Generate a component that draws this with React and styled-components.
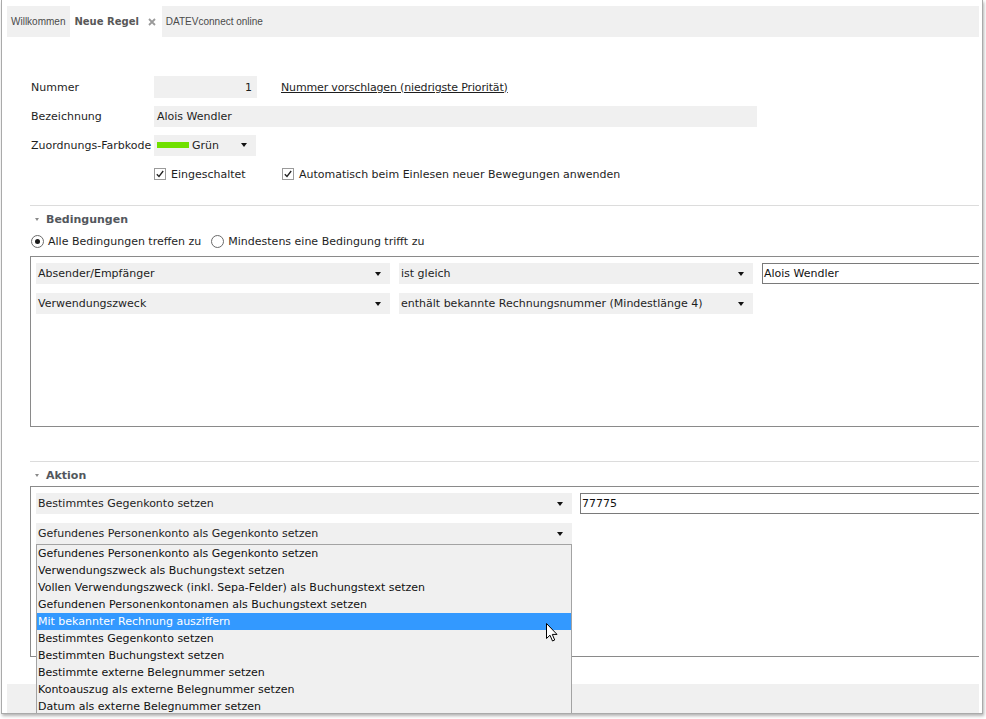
import React from "react";
import styled, { createGlobalStyle } from "styled-components";

const GlobalStyle = createGlobalStyle`
  html, body {
    margin: 0;
    padding: 0;
    background: #fff;
  }
  body {
    font-family: "DejaVu Sans", sans-serif;
    font-size: 11px;
    color: #1e1e1e;
  }
`;

const Screen = styled.div`
  width: 986px;
  height: 719px;
  overflow: hidden;
  background: #fff;
`;

const Frame = styled.div`
  box-sizing: border-box;
  margin-left: 1px;
  width: 982px;
  height: 714px;
  padding: 6px 3px 0 5px;
  border: 1px solid #aaaaaa;
  border-top: none;
  box-shadow: 1px 2px 3px rgba(0, 0, 0, 0.3);
  display: flex;
  flex-direction: column;
  overflow: hidden;
`;

const TabBar = styled.div`
  height: 31px;
  flex: none;
  display: flex;
  background: #f0f0f0;
`;

const Tab = styled.div`
  display: flex;
  align-items: center;
  gap: 9px;
  padding: ${(p) => (p.active ? "0 6px 0 4px" : "0 5px 0 4px")};
  background: ${(p) => (p.active ? "#fff" : "transparent")};
  color: ${(p) => (p.active ? "#585858" : "#4a4a4a")};
  font-family: ${(p) =>
    p.active ? '"DejaVu Sans", sans-serif' : '"Liberation Sans", sans-serif'};
  font-weight: ${(p) => (p.active ? 700 : 400)};
  font-size: 10px;
`;

const Content = styled.div`
  flex: 1;
  display: flex;
  flex-direction: column;
  overflow: hidden;
`;

const Form = styled.div`
  display: grid;
  grid-template-columns: 123px 1fr;
  grid-auto-rows: 22px;
  row-gap: 7px;
  padding: 39px 0 0 24px;
  align-items: center;
`;

const Label = styled.div`
  color: #1e1e1e;
`;

const Line = styled.div`
  display: flex;
  align-items: center;
  height: 100%;
`;

const Field = styled.div`
  box-sizing: border-box;
  width: ${(p) => p.w}px;
  height: ${(p) => p.h || 22}px;
  display: flex;
  align-items: center;
  justify-content: ${(p) => (p.right ? "flex-end" : "flex-start")};
  padding: 0 5px 0 3px;
  background: #f0f0f0;
`;

const LinkText = styled.span`
  margin-left: 24px;
  text-decoration: underline;
  color: #1e1e1e;
  letter-spacing: -0.15px;
`;

const SelectBox = styled.div`
  position: relative;
  box-sizing: border-box;
  width: ${(p) => p.w}px;
  height: 21px;
  flex: none;
  display: flex;
  align-items: center;
  gap: 3px;
  padding: 0 9px 0 2px;
  background: #f0f0f0;
`;

const SelectText = styled.span`
  flex: 1;
  white-space: nowrap;
`;

const Arrow = styled.span`
  width: 0;
  height: 0;
  border-left: 3.5px solid transparent;
  border-right: 3.5px solid transparent;
  border-top: 4px solid #111;
`;

const Swatch = styled.span`
  width: 32px;
  height: 6px;
  background: #70e000;
  margin-left: 1px;
`;

const CheckRow = styled.label`
  display: flex;
  align-items: center;
  gap: 5px;
  width: ${(p) => p.w || "auto"};
`;

const CheckBox = styled.span`
  box-sizing: border-box;
  width: 12px;
  height: 12px;
  border: 1px solid #9a9a9a;
  background: #fff;
  display: flex;
  align-items: center;
  justify-content: center;
`;

const Divider = styled.div`
  margin: ${(p) => p.top}px 0 0 23px;
  border-top: 1px solid #dcdcdc;
`;

const SectionHead = styled.div`
  box-sizing: border-box;
  height: 24px;
  padding-top: 2px;
  display: flex;
  align-items: center;
  gap: 7px;
  padding-left: 28px;
  font-weight: 700;
  color: #53575d;
`;

const Caret = styled.span`
  width: 0;
  height: 0;
  border-left: 2.5px solid transparent;
  border-right: 2.5px solid transparent;
  border-top: 3px solid #8a8a8a;
`;

const RadioRow = styled.div`
  height: 20px;
  margin-top: 1px;
  display: flex;
  align-items: center;
  padding-left: 24px;
`;

const RadioOption = styled.label`
  display: flex;
  align-items: center;
  gap: 4px;
  margin-right: 10px;
`;

const Radio = styled.span`
  box-sizing: border-box;
  width: 13px;
  height: 13px;
  border-radius: 50%;
  border: 1px solid #6a6a6a;
  background: #fff;
  display: flex;
  align-items: center;
  justify-content: center;
  &::after {
    content: "";
    width: 5px;
    height: 5px;
    border-radius: 50%;
    background: ${(p) => (p.checked ? "#1a1a1a" : "transparent")};
  }
`;

const RuleBox = styled.div`
  box-sizing: border-box;
  height: 171px;
  margin: ${(p) => p.top || 0}px -30px 0 23px;
  padding: 6px 5px;
  border: 1px solid #8a8a8a;
  display: flex;
  flex-direction: column;
  gap: 9px;
`;

const RuleRow = styled.div`
  display: flex;
  gap: ${(p) => p.gap || 9}px;
`;

const TextInput = styled.div`
  box-sizing: border-box;
  flex: 1;
  height: 21px;
  border: 1px solid #7a7a7a;
  background: #fff;
  display: flex;
  align-items: center;
  padding-left: 1px;
  color: #111;
`;

const DropList = styled.div`
  position: absolute;
  top: 100%;
  left: 0;
  z-index: 5;
  box-sizing: border-box;
  width: 536px;
  border: 1px solid #a3a3a3;
  background: #f0f0f0;
`;

const DropItem = styled.div`
  height: 17px;
  line-height: 17px;
  padding-left: 1px;
  white-space: nowrap;
  background: ${(p) => (p.selected ? "#3399ff" : "transparent")};
  color: ${(p) => (p.selected ? "#fff" : "#111")};
`;

const Pointer = styled.svg`
  position: absolute;
  left: 509px;
  top: 78px;
`;

const Footer = styled.div`
  margin-top: 27px;
  flex: 1;
  background: #f0f0f0;
`;

const CheckMark = () => (
  <svg width="8" height="8" viewBox="0 0 8 8">
    <path d="M0.8 4.2 L3 6.5 L7.2 1" fill="none" stroke="#222" strokeWidth="1.3" />
  </svg>
);

const CloseX = () => (
  <svg width="8" height="8" viewBox="0 0 8 8">
    <path d="M1 1 L7 7 M7 1 L1 7" stroke="#9a9a9a" strokeWidth="1.8" />
  </svg>
);

const Select = ({ w, children, list }) => (
  <SelectBox w={w}>
    <SelectText>{children}</SelectText>
    <Arrow />
    {list}
  </SelectBox>
);

const actions = [
  "Gefundenes Personenkonto als Gegenkonto setzen",
  "Verwendungszweck als Buchungstext setzen",
  "Vollen Verwendungszweck (inkl. Sepa-Felder) als Buchungstext setzen",
  "Gefundenen Personenkontonamen als Buchungstext setzen",
  "Mit bekannter Rechnung ausziffern",
  "Bestimmtes Gegenkonto setzen",
  "Bestimmten Buchungstext setzen",
  "Bestimmte externe Belegnummer setzen",
  "Kontoauszug als externe Belegnummer setzen",
  "Datum als externe Belegnummer setzen",
  "Buchungsdatum als Belegdatum setzen",
];

const ActionList = () => (
  <DropList>
    {actions.map((a, i) => (
      <DropItem key={i} selected={i === 4}>
        {a}
      </DropItem>
    ))}
    <Pointer width="13" height="20" viewBox="0 0 13 20">
      <path
        d="M0.5 0.5 L0.5 15.5 L4 12.2 L6.5 18 L8.7 17 L6.3 11.4 L11 11.4 Z"
        fill="#fff"
        stroke="#000"
        strokeWidth="1"
        strokeLinejoin="round"
      />
    </Pointer>
  </DropList>
);

export default function App() {
  return (
    <Screen>
      <GlobalStyle />
      <Frame>
        <TabBar>
          <Tab>Willkommen</Tab>
          <Tab active>
            Neue Regel
            <CloseX />
          </Tab>
          <Tab>DATEVconnect online</Tab>
        </TabBar>
        <Content>
          <Form>
            <Label>Nummer</Label>
            <Line>
              <Field w={103} right>
                1
              </Field>
              <LinkText>Nummer vorschlagen (niedrigste Priorität)</LinkText>
            </Line>
            <Label>Bezeichnung</Label>
            <Line>
              <Field w={603} h={21}>
                Alois Wendler
              </Field>
            </Line>
            <Label>Zuordnungs-Farbkode</Label>
            <Line>
              <SelectBox w={102}>
                <Swatch />
                <SelectText>Grün</SelectText>
                <Arrow />
              </SelectBox>
            </Line>
            <span />
            <Line>
              <CheckRow w="128px">
                <CheckBox>
                  <CheckMark />
                </CheckBox>
                Eingeschaltet
              </CheckRow>
              <CheckRow>
                <CheckBox>
                  <CheckMark />
                </CheckBox>
                Automatisch beim Einlesen neuer Bewegungen anwenden
              </CheckRow>
            </Line>
          </Form>

          <Divider top={20} />
          <SectionHead>
            <Caret />
            Bedingungen
          </SectionHead>
          <RadioRow>
            <RadioOption>
              <Radio checked />
              Alle Bedingungen treffen zu
            </RadioOption>
            <RadioOption>
              <Radio />
              Mindestens eine Bedingung trifft zu
            </RadioOption>
          </RadioRow>
          <RuleBox top={5}>
            <RuleRow>
              <Select w={354}>Absender/Empfänger</Select>
              <Select w={354}>ist gleich</Select>
              <TextInput>Alois Wendler</TextInput>
            </RuleRow>
            <RuleRow>
              <Select w={354}>Verwendungszweck</Select>
              <Select w={354}>enthält bekannte Rechnungsnummer (Mindestlänge 4)</Select>
            </RuleRow>
          </RuleBox>

          <Divider top={34} />
          <SectionHead>
            <Caret />
            Aktion
          </SectionHead>
          <RuleBox>
            <RuleRow gap={8}>
              <Select w={536}>Bestimmtes Gegenkonto setzen</Select>
              <TextInput>77775</TextInput>
            </RuleRow>
            <RuleRow>
              <Select w={536} list={<ActionList />}>
                Gefundenes Personenkonto als Gegenkonto setzen
              </Select>
            </RuleRow>
          </RuleBox>
          <Footer />
        </Content>
      </Frame>
    </Screen>
  );
}
